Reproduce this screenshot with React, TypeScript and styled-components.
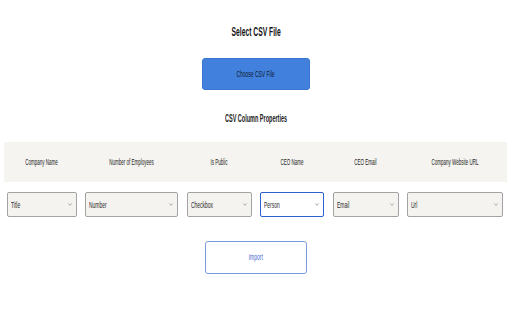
import styled, { createGlobalStyle } from 'styled-components';

const GlobalStyle = createGlobalStyle`
  html, body {
    margin: 0;
    padding: 0;
    background: #ffffff;
    font-family: "Liberation Sans", Arial, sans-serif;
  }
`;

const Page = styled.div`
  display: flex;
  flex-direction: column;
  align-items: center;
  width: 512px;
  height: 320px;
  padding-top: 25px;
  box-sizing: border-box;
  overflow: hidden;
`;

// the screenshot text is squeezed horizontally, so each text gets a scaleX
const Squeeze = styled.span<{ $sx: number }>`
  display: inline-block;
  white-space: nowrap;
  transform: scaleX(${(p) => p.$sx});
  transform-origin: center;
`;

const Title = styled.h1`
  margin: 0;
  height: 14px;
  line-height: 14px;
  font-size: 13.5px;
  font-weight: 700;
  color: #111111;
  text-align: center;
`;

const ChooseButton = styled.button`
  margin-top: 19px;
  width: 108px;
  height: 32px;
  border: 1px solid #3a74cf;
  border-radius: 3px;
  background: #4180dc;
  color: #101a2c;
  font-family: inherit;
  font-size: 9px;
  line-height: 1;
  padding: 0;
  cursor: pointer;
`;

const Subtitle = styled.h2`
  margin: 22px 0 0;
  height: 12px;
  line-height: 12px;
  font-size: 11px;
  font-weight: 700;
  color: #222222;
  text-align: center;
`;

const columns = '70px 93px 65px 64px 66px 96px';

const HeaderRow = styled.div`
  align-self: flex-start;
  margin: 18px 0 0 4px;
  width: 503px;
  height: 40px;
  padding-left: 3px;
  box-sizing: border-box;
  display: grid;
  grid-template-columns: ${columns};
  column-gap: 8.4px;
  align-items: center;
  background: #f5f4f0;
`;

const HeaderCell = styled.div`
  display: flex;
  justify-content: center;
  font-size: 9px;
  color: #1c1c1c;
  line-height: 1;
`;

const SelectRow = styled.div`
  align-self: flex-start;
  margin: 10px 0 0 7px;
  display: grid;
  grid-template-columns: ${columns};
  column-gap: 8.4px;
`;

const SelectBox = styled.div<{ $focused?: boolean }>`
  height: 25px;
  box-sizing: border-box;
  display: flex;
  align-items: center;
  justify-content: space-between;
  padding: 0 4px 0 3px;
  border: ${(p) => (p.$focused ? '1.5px solid #2b5fd3' : '1px solid #a3a3a3')};
  border-radius: 2px;
  background: ${(p) => (p.$focused ? '#ffffff' : '#f4f3ef')};
  font-size: 9px;
  color: #2a2a2a;
  overflow: hidden;

  & > span:first-child {
    transform-origin: left center;
  }
`;

const Chevron = styled.svg`
  width: 4px;
  height: 3px;
  flex: none;
`;

const ImportButton = styled.button`
  margin-top: 24px;
  width: 102px;
  height: 33px;
  border: 1px solid #7a9ad8;
  border-radius: 3px;
  background: #ffffff;
  color: #4468d0;
  font-family: inherit;
  font-size: 9px;
  line-height: 1;
  padding: 0;
  cursor: pointer;
`;

const fields = [
  { label: 'Company Name', type: 'Title' },
  { label: 'Number of Employees', type: 'Number' },
  { label: 'Is Public', type: 'Checkbox' },
  { label: 'CEO Name', type: 'Person', focused: true },
  { label: 'CEO Email', type: 'Email' },
  { label: 'Company Website URL', type: 'Url' },
];

export default function App() {
  return (
    <>
      <GlobalStyle />
      <Page>
        <Title>
          <Squeeze $sx={0.5}>Select CSV File</Squeeze>
        </Title>
        <ChooseButton>
          <Squeeze $sx={0.55}>Choose CSV File</Squeeze>
        </ChooseButton>
        <Subtitle>
          <Squeeze $sx={0.5}>CSV Column Properties</Squeeze>
        </Subtitle>

        <HeaderRow>
          {fields.map((f) => (
            <HeaderCell key={f.label}>
              <Squeeze $sx={0.5}>{f.label}</Squeeze>
            </HeaderCell>
          ))}
        </HeaderRow>

        <SelectRow>
          {fields.map((f) => (
            <SelectBox key={f.label} $focused={f.focused}>
              <Squeeze $sx={0.55}>{f.type}</Squeeze>
              <Chevron viewBox="0 0 4 3">
                <path d="M0.3 0.4 L2 2.4 L3.7 0.4" fill="none" stroke="#8a8a8a" strokeWidth="0.7" />
              </Chevron>
            </SelectBox>
          ))}
        </SelectRow>

        <ImportButton>
          <Squeeze $sx={0.55}>Import</Squeeze>
        </ImportButton>
      </Page>
    </>
  );
}
